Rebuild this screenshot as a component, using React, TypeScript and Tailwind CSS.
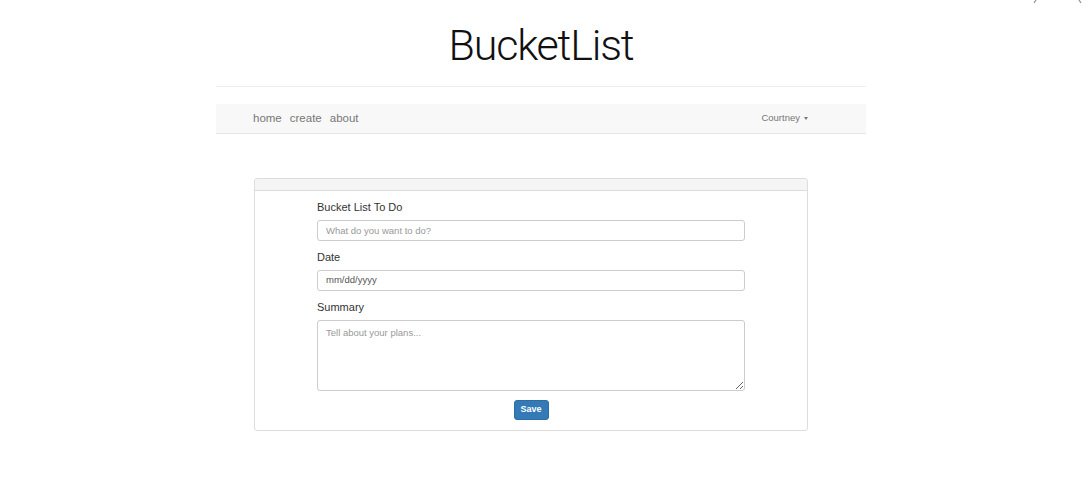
import React from 'react'

function Field({ label, children }: { label: string; children: React.ReactNode }) {
  return (
    <div className="mb-[9px]">
      <label className="block h-[14px] leading-[14px] mb-[6px] text-[11px] text-[#333]">{label}</label>
      {children}
    </div>
  )
}

export default function App() {
  return (
    <div className="relative min-h-[500px] bg-white font-['Liberation_Sans',Arial,sans-serif]">
      {/* bits of something cut off at the top right */}
      <svg className="absolute left-[1030px] top-0" width="58" height="6" viewBox="0 0 58 6">
        <path d="M6 0 L4 3" stroke="#8a8f96" strokeWidth="1.2" />
        <path d="M49 0 L51 3" stroke="#8a8f96" strokeWidth="1.2" />
      </svg>

      <div className="w-[1082px]">
        <div className="mx-auto w-[650px]">
          <div className="h-[87px] flex items-center justify-center border-b border-[#eee] pt-[5px]">
            <h1 className="font-['Roboto',sans-serif] font-light text-[43px] leading-none text-[#111] tracking-[-1.2px]">
              BucketList
            </h1>
          </div>

          <nav className="mt-[17px] h-[30px] bg-[#f8f8f8] border-b border-[#e7e7e7] flex items-center justify-between pl-[37px] pr-[58px]">
            <div className="flex gap-[8px] text-[11.5px] text-[#777]">
              <a>home</a>
              <a>create</a>
              <a>about</a>
            </div>
            <div className="flex items-center gap-[4px] text-[9.5px] text-[#777]">
              Courtney
              <span className="inline-block border-x-[2.5px] border-x-transparent border-t-[3px] border-t-[#777]" />
            </div>
          </nav>

          <div className="ml-[38px] mt-[44px] w-[554px] border border-[#ddd] rounded-[3px] bg-white">
            <div className="h-[12px] bg-[#f5f5f5] border-b border-[#ddd] rounded-t-[3px]" />
            <div className="px-[62px] pt-[9px] pb-[10px]">
              <Field label="Bucket List To Do">
                <input
                  className="block w-full h-[21px] border border-[#ccc] rounded-[3px] px-[8px] text-[9.5px] text-[#555] placeholder:text-[#999] outline-none"
                  placeholder="What do you want to do?"
                />
              </Field>
              <Field label="Date">
                <div className="w-full h-[21px] border border-[#ccc] rounded-[3px] px-[8px] flex items-center text-[9.5px] text-[#555]">
                  mm/dd/yyyy
                </div>
              </Field>
              <Field label="Summary">
                <textarea
                  className="block w-full h-[71px] border border-[#ccc] rounded-[3px] px-[8px] py-[5px] text-[9.5px] text-[#555] placeholder:text-[#999] outline-none"
                  placeholder="Tell about your plans..."
                />
              </Field>
              <div className="flex justify-center">
                <button className="w-[35px] h-[20px] bg-[#337ab7] border border-[#2e6da4] rounded-[3px] text-white text-[9px] font-bold">
                  Save
                </button>
              </div>
            </div>
          </div>
        </div>
      </div>
    </div>
  )
}
